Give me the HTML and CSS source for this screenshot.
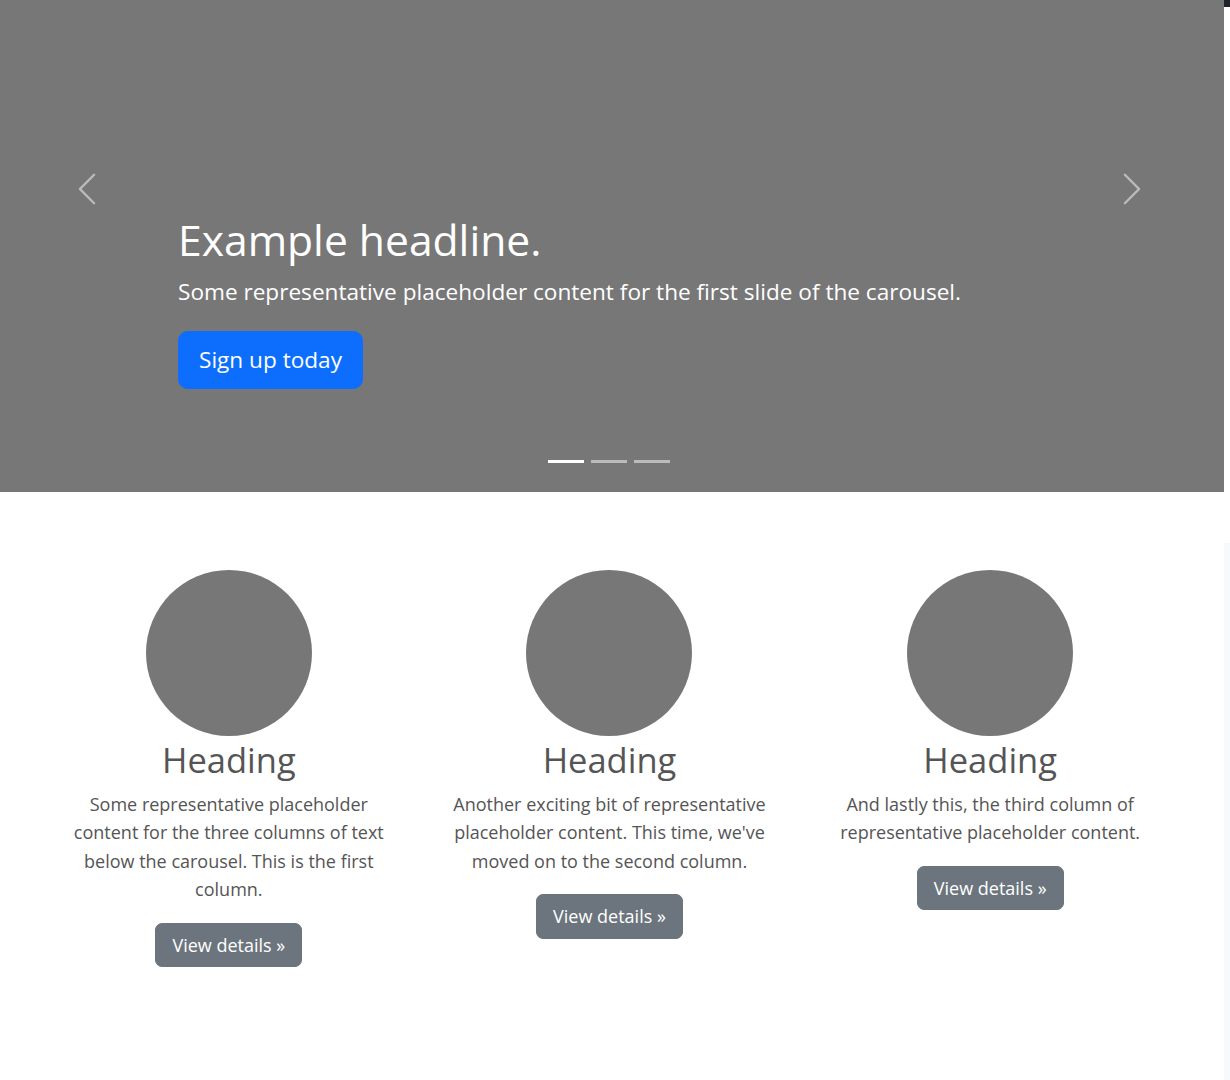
FILE: index.html
```html
<!DOCTYPE html>
<html lang="en">
<head>
    <meta charset="UTF-8">
    <meta name="viewport" content="width=device-width, initial-scale=1.0">
    <title>Carousel Template</title>
    <link rel="stylesheet" href="styles.css">
</head>
<body>
    <div class="page">
        <main class="main">
            <div class="carousel">
                <button class="carousel-control control-prev" type="button" aria-label="Previous">
                    <svg class="control-icon" viewBox="0 0 16 16" fill="#fff"><path d="M11.354 1.646a.5.5 0 0 1 0 .708L5.707 8l5.647 5.646a.5.5 0 0 1-.708.708l-6-6a.5.5 0 0 1 0-.708l6-6a.5.5 0 0 1 .708 0z"/></svg>
                </button>
                <div class="carousel-center">
                    <div class="carousel-caption">
                        <h1>Example headline.</h1>
                        <p class="caption-text">Some representative placeholder content for the first slide of the carousel.</p>
                        <a class="btn btn-lg btn-primary" href="#">Sign up today</a>
                    </div>
                    <div class="carousel-indicators">
                        <span class="indicator active"></span>
                        <span class="indicator"></span>
                        <span class="indicator"></span>
                    </div>
                </div>
                <button class="carousel-control control-next" type="button" aria-label="Next">
                    <svg class="control-icon" viewBox="0 0 16 16" fill="#fff"><path d="M4.646 1.646a.5.5 0 0 1 .708 0l6 6a.5.5 0 0 1 0 .708l-6 6a.5.5 0 0 1-.708-.708L10.293 8 4.646 2.354a.5.5 0 0 1 0-.708z"/></svg>
                </button>
            </div>

            <div class="marketing">
                <div class="col">
                    <div class="circle"></div>
                    <h2>Heading</h2>
                    <p>Some representative placeholder content for the three columns of text below the carousel. This is the first column.</p>
                    <a class="btn btn-secondary" href="#">View details &raquo;</a>
                </div>
                <div class="col">
                    <div class="circle"></div>
                    <h2>Heading</h2>
                    <p>Another exciting bit of representative placeholder content. This time, we've moved on to the second column.</p>
                    <a class="btn btn-secondary" href="#">View details &raquo;</a>
                </div>
                <div class="col">
                    <div class="circle"></div>
                    <h2>Heading</h2>
                    <p>And lastly this, the third column of representative placeholder content.</p>
                    <a class="btn btn-secondary" href="#">View details &raquo;</a>
                </div>
            </div>
        </main>
        <div class="rail">
            <div class="rail-top"></div>
            <div class="rail-track"></div>
        </div>
    </div>
</body>
</html>
```

FILE: styles.css
```css
body {
    margin: 0;
    font-family: "Open Sans", "Noto Sans", sans-serif;
    font-size: 18px;
    line-height: 28.5px;
    color: #555;
    background: #fff;
}
.page {
    display: flex;
    min-height: 1080px;
}
.main {
    flex: 1;
    min-width: 0;
}
.rail {
    width: 6px;
    display: flex;
    flex-direction: column;
}
.rail-top {
    height: 7px;
    background-color: #212529;
}
.rail-track {
    flex: 1;
    margin-top: 536px;
    background-color: #f8f9fa;
}

/* carousel */
.carousel {
    display: flex;
    height: 492px;
    background-color: #777;
}
.carousel-control {
    display: flex;
    justify-content: center;
    align-items: flex-start;
    padding: 170px 0 0;
    border: none;
    background: none;
    cursor: pointer;
}
.control-prev {
    width: 173px;
}
.control-next {
    width: 185px;
}
.control-icon {
    width: 38px;
    height: 38px;
    opacity: 0.5;
}
.carousel-center {
    flex: 1;
    display: flex;
    flex-direction: column;
}
.carousel-caption {
    padding: 211px 0 0 5px;
    color: #fff;
}
.carousel-caption h1 {
    margin: 0 0 7px;
    font-size: 42.6px;
    font-weight: 400;
    line-height: 57px;
}
.caption-text {
    margin: 0 0 23px;
    font-size: 22.6px;
    line-height: 33.25px;
}
.carousel-indicators {
    display: flex;
    justify-content: center;
    gap: 7px;
    margin-top: 71px;
    padding-left: 6px;
}
.indicator {
    width: 36px;
    height: 3px;
    background-color: #fff;
    opacity: 0.5;
}
.indicator.active {
    opacity: 1;
}

/* buttons */
.btn {
    display: inline-block;
    border: 1px solid transparent;
    color: #fff;
    text-decoration: none;
    text-align: center;
}
.btn-lg {
    padding: 10px 20px;
    font-size: 22.6px;
    line-height: 36px;
    border-radius: 9.5px;
}
.btn-primary {
    background-color: #0d6efd;
    border-color: #0d6efd;
}
.btn-secondary {
    padding: 7px 16px;
    font-size: 18px;
    line-height: 28.5px;
    border-radius: 7px;
    background-color: #6c757d;
    border-color: #6c757d;
}

/* marketing columns */
.marketing {
    display: grid;
    grid-template-columns: repeat(3, 1fr);
    width: 1142px;
    margin-left: 38.5px;
    padding-top: 78px;
}
.col {
    padding: 0 14px;
    text-align: center;
}
.circle {
    width: 166px;
    height: 166px;
    margin: 0 auto;
    border-radius: 50%;
    background-color: #777;
}
.col h2 {
    margin: 1px 0 7px;
    font-size: 34.5px;
    font-weight: 400;
    line-height: 45.6px;
}
.col p {
    margin: 0 14px 19px;
}
```
